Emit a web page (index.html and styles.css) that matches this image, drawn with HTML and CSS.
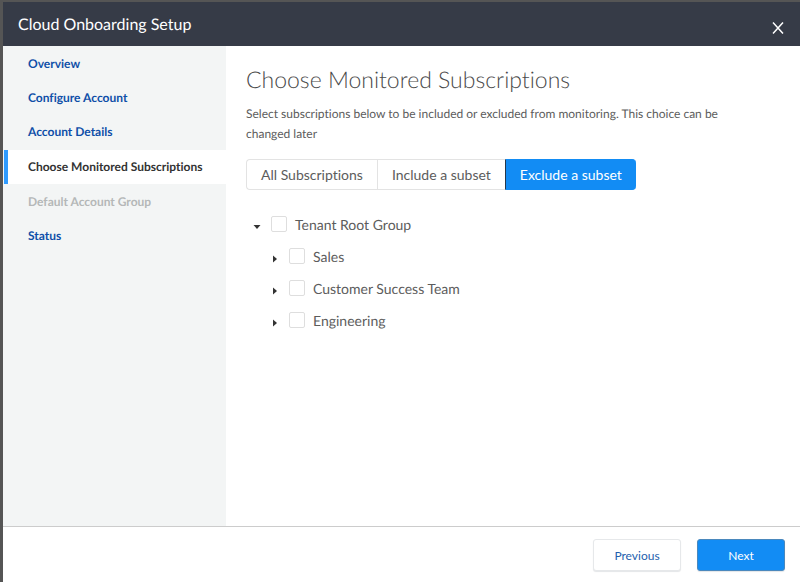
FILE: index.html
```html
<!DOCTYPE html>
<html lang="en">
<head>
<meta charset="utf-8">
<meta name="viewport" content="width=device-width, initial-scale=1">
<title>Cloud Onboarding Setup</title>
<link rel="stylesheet" href="styles.css">
</head>
<body>
<div class="dialog" role="dialog" aria-labelledby="dialog-title">
  <header class="header">
    <h1 class="title" id="dialog-title">Cloud Onboarding Setup</h1>
    <button class="close" type="button" aria-label="Close">
      <svg width="12" height="12" viewBox="0 0 12 12" fill="none" stroke="currentColor" stroke-width="1.5"><path d="M1 0.5 11 11.5M11 0.5 1 11.5"/></svg>
    </button>
  </header>
  <div class="body">
    <nav class="steps">
      <a class="step" href="#">Overview</a>
      <a class="step" href="#">Configure Account</a>
      <a class="step" href="#">Account Details</a>
      <a class="step step-active" href="#" aria-current="step">Choose Monitored Subscriptions</a>
      <a class="step step-disabled" aria-disabled="true">Default Account Group</a>
      <a class="step" href="#">Status</a>
    </nav>
    <main class="content">
      <h2 class="heading">Choose Monitored Subscriptions</h2>
      <p class="intro">Select subscriptions below to be included or excluded from monitoring. This choice can be changed later</p>
      <div class="segments">
        <button class="segment" type="button">All Subscriptions</button>
        <button class="segment" type="button">Include a subset</button>
        <button class="segment segment-active" type="button" aria-pressed="true">Exclude a subset</button>
      </div>
      <ul class="tree">
        <li>
          <div class="node">
            <button class="toggle" type="button" aria-label="Collapse Tenant Root Group"><svg width="8" height="8" viewBox="0 0 8 8" fill="currentColor"><path d="M0.5 2h7L4 6z"/></svg></button>
            <input class="check" type="checkbox" id="root"><label for="root">Tenant Root Group</label>
          </div>
          <ul class="branch">
            <li class="node">
              <button class="toggle" type="button" aria-label="Expand Sales"><svg width="8" height="8" viewBox="0 0 8 8" fill="currentColor"><path d="M2 0.5v7L6 4z"/></svg></button>
              <input class="check" type="checkbox" id="sales"><label for="sales">Sales</label>
            </li>
            <li class="node">
              <button class="toggle" type="button" aria-label="Expand Customer Success Team"><svg width="8" height="8" viewBox="0 0 8 8" fill="currentColor"><path d="M2 0.5v7L6 4z"/></svg></button>
              <input class="check" type="checkbox" id="success"><label for="success">Customer Success Team</label>
            </li>
            <li class="node">
              <button class="toggle" type="button" aria-label="Expand Engineering"><svg width="8" height="8" viewBox="0 0 8 8" fill="currentColor"><path d="M2 0.5v7L6 4z"/></svg></button>
              <input class="check" type="checkbox" id="engineering"><label for="engineering">Engineering</label>
            </li>
          </ul>
        </li>
      </ul>
    </main>
  </div>
  <footer class="footer">
    <button class="button" type="button">Previous</button>
    <button class="button button-primary" type="button">Next</button>
  </footer>
</div>
</body>
</html>
```
FILE: styles.css
```css
* {
  box-sizing: border-box;
}

body {
  margin: 0;
  min-height: 100vh;
  display: flex;
  padding: 2px 0 0 3px;
  background: #555;
  color: #5c5c5c;
  font-family: Lato, "Liberation Sans", sans-serif;
  font-size: 14px;
  font-variant-ligatures: none;
  text-rendering: geometricPrecision;
}

button {
  font: inherit;
  cursor: pointer;
}

ul {
  list-style: none;
  margin: 0;
  padding: 0;
}

.dialog {
  flex: 1;
  display: flex;
  flex-direction: column;
  background: #fff;
}

.header {
  display: flex;
  align-items: center;
  justify-content: space-between;
  height: 44px;
  padding: 0 16px 0 15px;
  background: #363b47;
  color: #fff;
}

.title {
  margin: 0;
  font-size: 16px;
  font-weight: 400;
}

.close {
  display: flex;
  padding: 8px 0 0;
  border: 0;
  background: none;
  color: #fff;
}

.body {
  flex: 1;
  display: flex;
}

.steps {
  width: 223px;
  padding: 1px 0 0 1px;
  background: #f3f5f5;
}

.step {
  display: block;
  padding: 0 24px;
  color: #0f4fa8;
  font-size: 12px;
  font-weight: 700;
  line-height: 34px;
  text-decoration: none;
  white-space: nowrap;
}

.step-active {
  margin: 1px 0;
  padding-left: 20px;
  border-left: 4px solid #2f9bff;
  background: #fff;
  color: #333;
}

.step-disabled {
  color: #b5b8b8;
}

.content {
  flex: 1;
  padding: 18px 60px 0 20px;
}

.heading {
  margin: 0;
  color: #4a4a4a;
  font-size: 23px;
  font-weight: 300;
  line-height: 30px;
}

.intro {
  margin: 10px 0 15px;
  font-size: 12px;
  line-height: 20px;
}

.segments {
  display: flex;
}

.segment {
  height: 31px;
  padding: 0 14px;
  border: 1px solid #e3e3e3;
  border-right: 0;
  background: #fff;
  color: #5c5c5c;
}

.segment:first-child {
  border-radius: 4px 0 0 4px;
}

.segment-active {
  border-color: #128cf4;
  border-left-color: #26384c;
  border-radius: 0 4px 4px 0;
  background: #128cf4;
  color: #fff;
}

.tree {
  margin-top: 18px;
  padding-left: 7px;
}

.branch {
  padding-left: 18px;
}

.node {
  display: flex;
  align-items: center;
  height: 32px;
}

.toggle {
  display: flex;
  padding: 6px 0 0;
  border: 0;
  background: none;
  color: #333;
}

.check {
  appearance: none;
  width: 16px;
  height: 16px;
  margin: 0 8px 0 10px;
  border: 1px solid #dedede;
  border-radius: 2px;
  background: #fff;
}

.footer {
  display: flex;
  justify-content: flex-end;
  gap: 16px;
  padding: 12px 15px 11px;
  border-top: 1px solid #ccc;
}

.button {
  width: 88px;
  height: 32px;
  border: 1px solid #e6e8ea;
  border-radius: 3px;
  background: #fff;
  box-shadow: 0 1px 1px #e4e6e8;
  color: #1f5fae;
  font-size: 12px;
}

.button-primary {
  border-color: #4a88bd;
  background: #128cf4;
  color: #fff;
}
```
